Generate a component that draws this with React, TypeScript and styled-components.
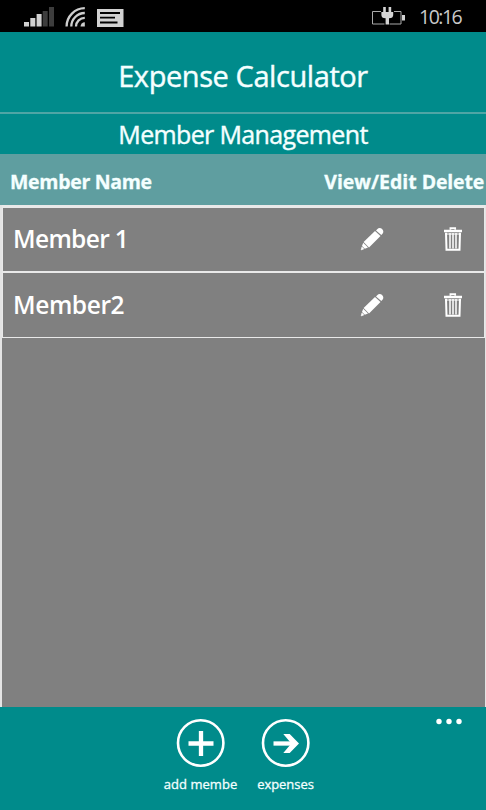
import React from "react";
import styled, { createGlobalStyle } from "styled-components";

const GlobalStyle = createGlobalStyle`
  *, *::before, *::after { box-sizing: border-box; }
  html, body { margin: 0; padding: 0; background: #008b8b; }
  body { font-family: "Open Sans", "Noto Sans", sans-serif; color: #f4ffff; overflow: hidden; }
`;

const Screen = styled.div`
  width: 486px;
  height: 810px;
  display: flex;
  flex-direction: column;
  background: #008b8b;
`;

const Text = styled.span<{ $size: number; $weight?: number; $spacing?: number; $stroke?: number }>`
  font-size: ${(p) => p.$size}px;
  font-weight: ${(p) => p.$weight ?? 400};
  letter-spacing: ${(p) => p.$spacing ?? 0}px;
  -webkit-text-stroke: ${(p) => p.$stroke ?? 0}px currentColor;
  line-height: 1;
  white-space: nowrap;
`;

const StatusBar = styled.header`
  height: 32px;
  flex: none;
  display: flex;
  justify-content: space-between;
  background: #000;
  color: #c9c9c9;
`;

const StatusIcons = styled.svg`
  display: block;
  flex: none;
`;

const Clock = styled.div`
  width: 67px;
  padding: 7px 0 0 0;
  display: flex;
`;

const StatusRight = styled.div`
  display: flex;
`;

const TitleBar = styled.div`
  height: 80px;
  flex: none;
  display: flex;
  justify-content: center;
  padding-top: 29px;
`;

const SubtitleBar = styled.div`
  height: 42px;
  flex: none;
  display: flex;
  justify-content: center;
  border-top: 2px solid #4fa5a5;
  padding-top: 8px;
`;

const ColumnHeader = styled.div`
  height: 51px;
  flex: none;
  display: flex;
  justify-content: space-between;
  padding: 18px 2px 0 10px;
  background: #5f9ea0;
`;

const ColumnActions = styled.div`
  display: flex;
  gap: 5px;
`;

const List = styled.main`
  flex: 1;
  display: flex;
  flex-direction: column;
  background: #808080;
  border: solid #e4e4e4;
  border-width: 0 1px 0 2px;
`;

const Row = styled.div<{ $first?: boolean }>`
  height: ${(p) => (p.$first ? 68 : 65)}px;
  flex: none;
  display: flex;
  align-items: center;
  padding: 0 21px 2px 10px;
  padding-top: ${(p) => (p.$first ? 0 : 1)}px;
  border: solid #e9e9e9;
  border-width: ${(p) => (p.$first ? "3px 1px 2px 1px" : "0 1px 1px 1px")};
  color: #fff;
`;

const MemberName = styled.div`
  flex: 1;
  display: flex;
  padding-top: 2px;
`;

const RowActions = styled.div`
  display: flex;
  gap: 59px;
  align-items: center;
`;

const AppBar = styled.footer`
  height: 103px;
  flex: none;
  display: grid;
  grid-template-columns: 158px 85px 85px 1fr;
`;

const AppButton = styled.button`
  border: 0;
  background: none;
  color: inherit;
  font-family: inherit;
  padding: 11px 0 0;
  display: flex;
  flex-direction: column;
  align-items: center;
  gap: 10px;
`;

const MoreButton = styled(AppButton)`
  align-items: flex-end;
  padding: 10px 22px 0 0;
`;

const Icon = styled.svg`
  display: block;
  flex: none;
`;

const SignalIcons = () => (
  <StatusIcons width="130" height="32" viewBox="0 0 130 32">
    <g fill="#d0d0d0">
      <rect x="24" y="22" width="5" height="4.5" />
      <rect x="30.3" y="18" width="5" height="8.5" />
      <rect x="36.6" y="14" width="5" height="12.5" />
    </g>
    <g fill="#3d3d3d">
      <rect x="42.7" y="11" width="5" height="15.5" />
      <rect x="49" y="7" width="5" height="19.5" />
    </g>
    <g fill="none" stroke="#cecece" strokeWidth="2.3">
      <path d="M66.6 26.5A18.3 18.3 0 0 1 84.8 8.2" />
      <path d="M71.3 26.5A13.5 13.5 0 0 1 84.8 13" />
      <path d="M76 26.5A8.8 8.8 0 0 1 84.8 17.8" />
    </g>
    <path d="M80.5 26.5a4.3 4.3 0 0 1 4.3-4.3v4.3z" fill="#cecece" />
    <rect x="97" y="9" width="26.5" height="18" fill="#d2d2d2" />
    <path d="M100 13h20M100 17.7h15M100 22.5h17.5" stroke="#000" strokeWidth="1.8" />
  </StatusIcons>
);

const BatteryIcon = () => (
  <StatusIcons width="49" height="32" viewBox="370 0 49 32">
    <path d="M381 11.5h-8.5v12.5h12M389.5 24H401V11.5h-7" fill="none" stroke="#aaa" strokeWidth="1" />
    <path
      d="M383.2 7h2.6v5h2.8V7h2.6v5h2v3c0 2-1.2 3.3-4.2 3.3V24.5h-3.4v-6.2c-3 0-4.2-1.3-4.2-3.3v-3h1.8z"
      fill="#d4d4d4"
    />
    <rect x="402" y="15" width="3" height="5.5" fill="#d4d4d4" />
  </StatusIcons>
);

const PencilIcon = () => (
  <Icon width="24" height="24" viewBox="0 0 24 24" fill="#fff">
    <path d="M17.2 2.2c1.3-1.5 3.4-1.5 4.9-.3 1.5 1.4 1.6 3.3.4 4.9l-1.2 1.2-5.3-4.6z" />
    <path d="M15 4l5.5 5L9 20.4 3.6 15z" />
    <path d="M3.2 15.7l4.8 4.8-3.2 1.2-2.8-2.7z" />
    <path d="M1.9 20l1.9 1.9-2.6 1z" stroke="#fff" strokeWidth=".6" strokeLinejoin="round" />
  </Icon>
);

const TrashIcon = () => (
  <Icon width="20" height="26" viewBox="0 0 20 26" fill="none" stroke="#fff">
    <path d="M7.4 3.7V2.2h4.8v1.5" strokeWidth="1.7" />
    <path d="M1 5h18" strokeWidth="2.5" />
    <path d="M3 6.8l.5 16.9h13L17 6.8" strokeWidth="2" />
    <path d="M7 7v15.5M10 7v15.5M13 7v15.5" strokeWidth="1.5" />
    <path d="M2 8h16" strokeWidth="1" />
  </Icon>
);

const PlusIcon = () => (
  <Icon width="50" height="50" viewBox="0 0 50 50" fill="none" stroke="#fff">
    <circle cx="24.7" cy="25" r="22.7" strokeWidth="2.6" />
    <path d="M12.5 25.5h25M25 13v25" strokeWidth="4.3" />
  </Icon>
);

const ArrowIcon = () => (
  <Icon width="50" height="50" viewBox="0 0 50 50" fill="none" stroke="#fff">
    <circle cx="24.7" cy="25" r="22.7" strokeWidth="2.6" />
    <path d="M12.5 25.5h22" strokeWidth="4.3" />
    <path d="M22.3 16h6.4l9.3 9.5-9.3 9.5h-6.4l8-9.5z" fill="#fff" stroke="none" />
  </Icon>
);

const MoreIcon = () => (
  <Icon width="30" height="10" viewBox="0 0 30 10" fill="#fff">
    <circle cx="5" cy="4.5" r="2.7" />
    <circle cx="15" cy="4.5" r="2.7" />
    <circle cx="25" cy="4.5" r="2.7" />
  </Icon>
);

const members = ["Member 1", "Member2"];

export default function App() {
  return (
    <Screen>
      <GlobalStyle />
      <StatusBar>
        <SignalIcons />
        <StatusRight>
          <BatteryIcon />
          <Clock>
            <Text $size={19.5} $spacing={-1.5}>10:16</Text>
          </Clock>
        </StatusRight>
      </StatusBar>
      <TitleBar>
        <Text $size={29} $spacing={-0.42} $stroke={0.4}>Expense Calculator</Text>
      </TitleBar>
      <SubtitleBar>
        <Text $size={25} $spacing={-0.65} $stroke={0.4}>Member Management</Text>
      </SubtitleBar>
      <ColumnHeader>
        <Text $size={19.5} $weight={700} $spacing={-0.3} $stroke={0.3}>Member Name</Text>
        <ColumnActions>
          <Text $size={19.5} $weight={700} $stroke={0.3}>View/Edit</Text>
          <Text $size={19.5} $weight={700} $spacing={-0.2} $stroke={0.3}>Delete</Text>
        </ColumnActions>
      </ColumnHeader>
      <List>
        {members.map((name, i) => (
          <Row key={name} $first={i === 0}>
            <MemberName>
              <Text $size={24.5} $weight={600} $spacing={i === 0 ? -0.65 : -0.4}>{name}</Text>
            </MemberName>
            <RowActions>
              <PencilIcon />
              <TrashIcon />
            </RowActions>
          </Row>
        ))}
      </List>
      <AppBar>
        <span />
        <AppButton>
          <PlusIcon />
          <Text $size={13} $spacing={0.05} $stroke={0.3}>add membe</Text>
        </AppButton>
        <AppButton>
          <ArrowIcon />
          <Text $size={13} $spacing={-0.05} $stroke={0.3}>expenses</Text>
        </AppButton>
        <MoreButton aria-label="More">
          <MoreIcon />
        </MoreButton>
      </AppBar>
    </Screen>
  );
}
